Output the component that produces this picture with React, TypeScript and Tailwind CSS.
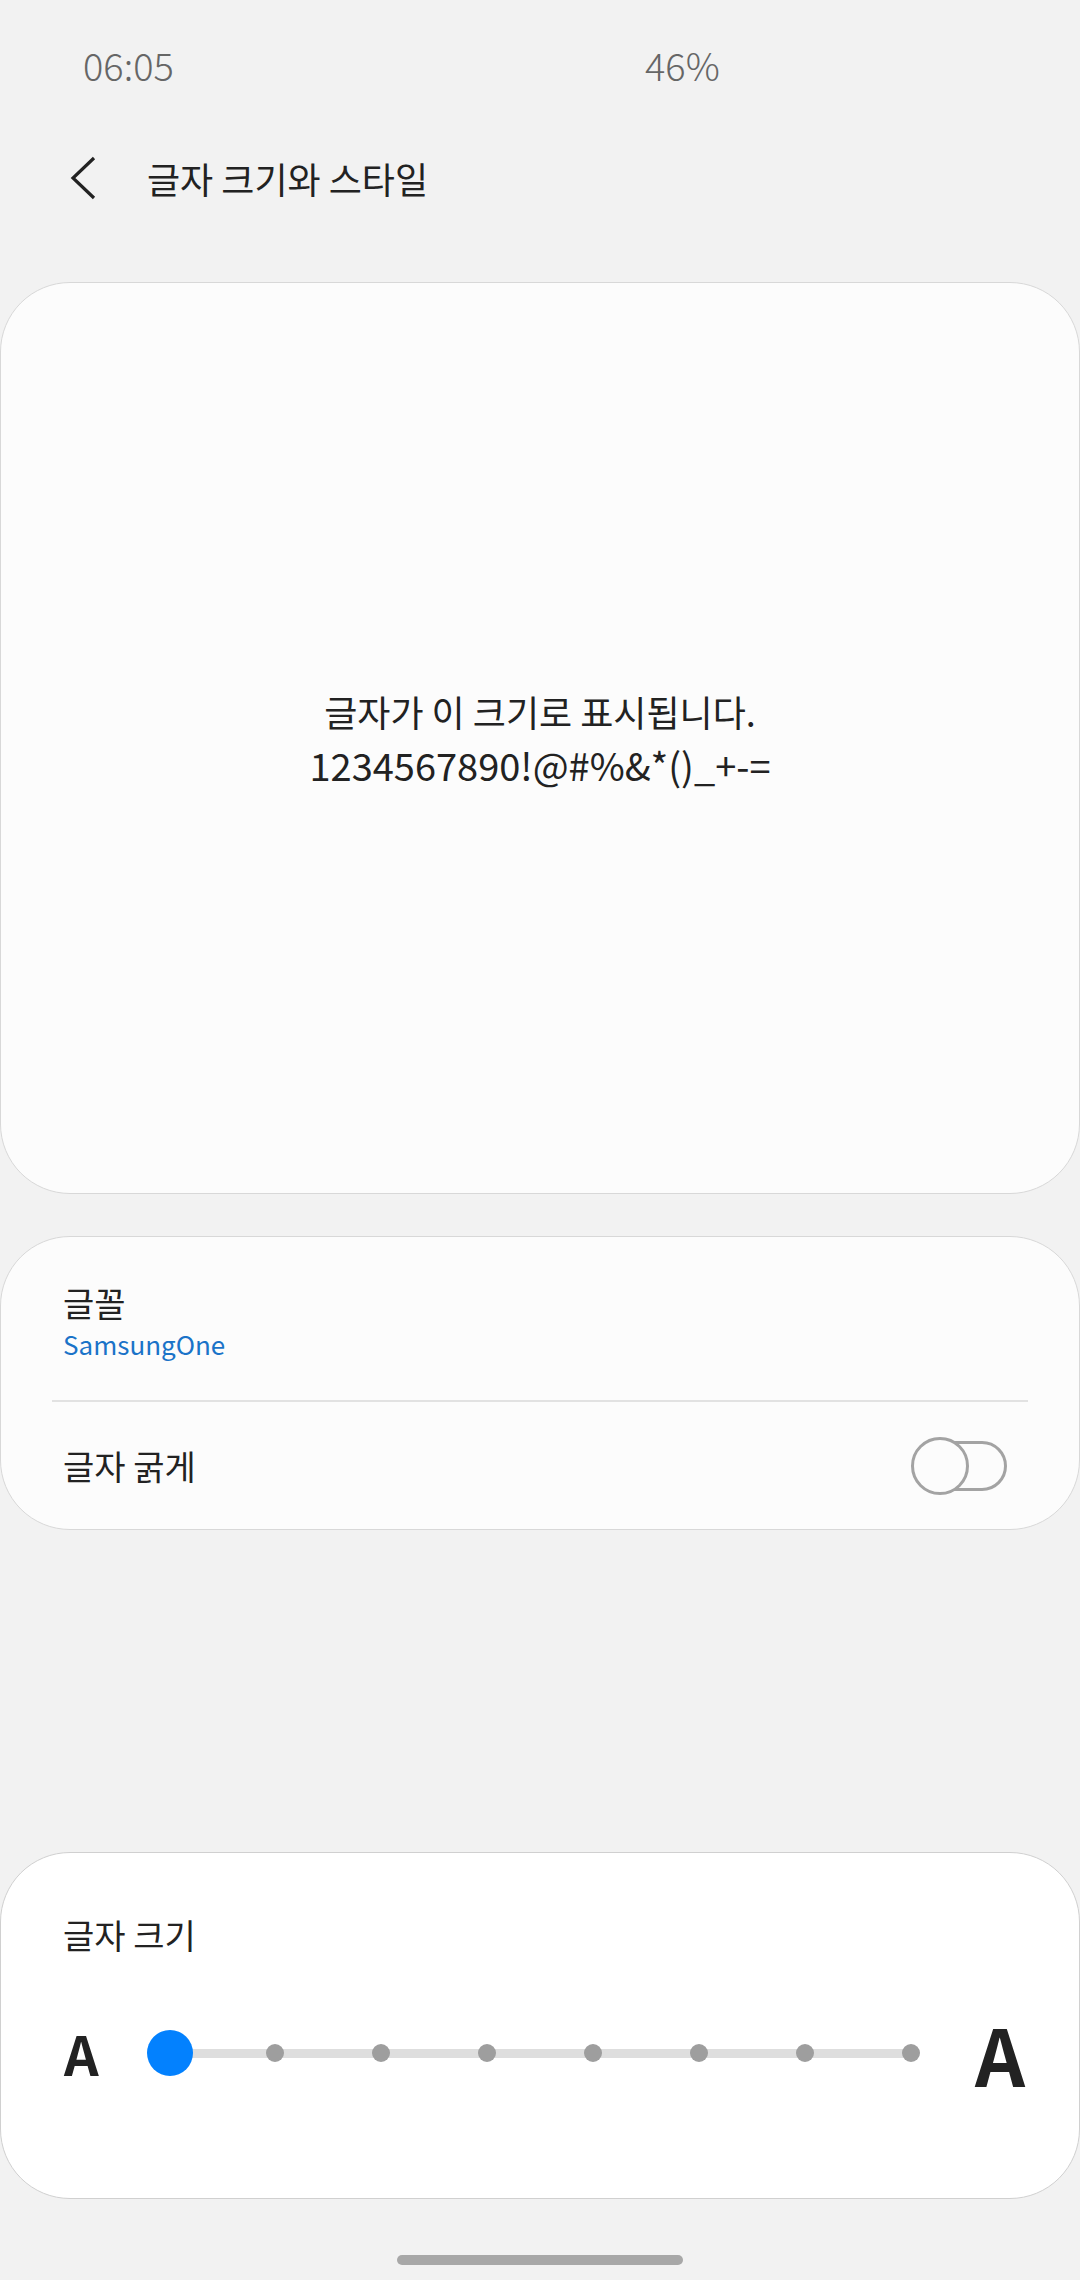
import React from "react";

const font = { fontFamily: '"Noto Sans CJK KR", "Noto Sans", sans-serif' };

const StatusBar = () => (
  <div className="flex items-center h-[128px] pl-[83px] text-[38px] font-light text-[#666666]">
    <span className="w-[562px]">06:05</span>
    <span>46%</span>
  </div>
);

const TitleBar = () => (
  <div className="flex items-center h-[100px] pl-[68px]">
    <svg width="30" height="46" viewBox="0 0 30 46" fill="none" stroke="#222222" strokeWidth="3.2">
      <polyline points="26 3 5 23 26 43" />
    </svg>
    <span className="ml-[49px] text-[36px] text-[#222222]">글자 크기와 스타일</span>
  </div>
);

// Off-state switch, Samsung style
const Toggle = () => (
  <div className="relative w-[98px] h-[58px]">
    <div className="absolute left-[18px] top-[4px] w-[78px] h-[50px] rounded-full border-[3px] border-[#a3a3a3]" />
    <div className="absolute left-0 top-0 w-[58px] h-[58px] rounded-full border-[3px] border-[#a3a3a3] bg-[#fcfcfc]" />
  </div>
);

const SizeSlider = () => {
  const steps = [1, 2, 3, 4, 5, 6, 7];
  return (
    <div className="flex items-center h-[70px] pl-[63px] pr-[54px]">
      <span className="w-[40px] text-[54px] font-bold leading-none text-[#222222]">A</span>
      <div className="relative ml-[43px] w-[779px] h-[46px] flex items-center">
        <div className="absolute left-[22px] right-[12px] h-[9px] bg-[#dedede] rounded-full" />
        <div className="relative w-[46px] h-[46px] rounded-full bg-[#0381fe]" />
        {steps.map((s, i) => (
          <div
            key={s}
            className={`relative w-[18px] h-[18px] rounded-full bg-[#9e9e9e] ${i === 0 ? "ml-[73px]" : "ml-[88px]"}`}
          />
        ))}
      </div>
      <span className="ml-auto text-[78px] font-bold leading-none text-[#222222]">A</span>
    </div>
  );
};

export default function App() {
  return (
    <div className="w-[1080px] h-[2280px] bg-[#f2f2f2] flex flex-col" style={font}>
      <StatusBar />
      <TitleBar />

      {/* Preview card */}
      <div className="mt-[54px] h-[912px] rounded-[70px] border border-[#d8d8d8] bg-[#fcfcfc] flex flex-col items-center justify-center leading-[53px] text-[#222222]">
        <span className="text-[36px]">글자가 이 크기로 표시됩니다.</span>
        <span className="text-[38px]">1234567890!@#%&amp;*()_+-=</span>
      </div>

      {/* Font options card */}
      <div className="mt-[42px] h-[294px] rounded-[70px] border border-[#d8d8d8] bg-[#fcfcfc] flex flex-col">
        <div className="h-[163px] flex flex-col justify-center pl-[62px] pt-[4px]">
          <span className="text-[34px] leading-[46px] text-[#222222]">글꼴</span>
          <span className="text-[26px] leading-[36px] text-[#1a73c8]">SamsungOne</span>
        </div>
        <div className="mx-[51px] h-[2px] bg-[#e2e2e2]" />
        <div className="flex-1 flex items-center justify-between pl-[62px] pr-[70px]">
          <span className="text-[34px] text-[#222222]">글자 굵게</span>
          <Toggle />
        </div>
      </div>

      {/* Font size card */}
      <div className="mt-[322px] h-[347px] rounded-[70px] border border-[#d0d0d0] bg-white flex flex-col">
        <div className="pl-[62px] pt-[52px] text-[34px] leading-[60px] text-[#222222]">글자 크기</div>
        <div className="mt-[53px]">
          <SizeSlider />
        </div>
      </div>

      <div className="flex-1 flex justify-center pt-[56px]">
        <div className="w-[286px] h-[10px] rounded-full bg-[#a8a8a8]" />
      </div>
    </div>
  );
}
